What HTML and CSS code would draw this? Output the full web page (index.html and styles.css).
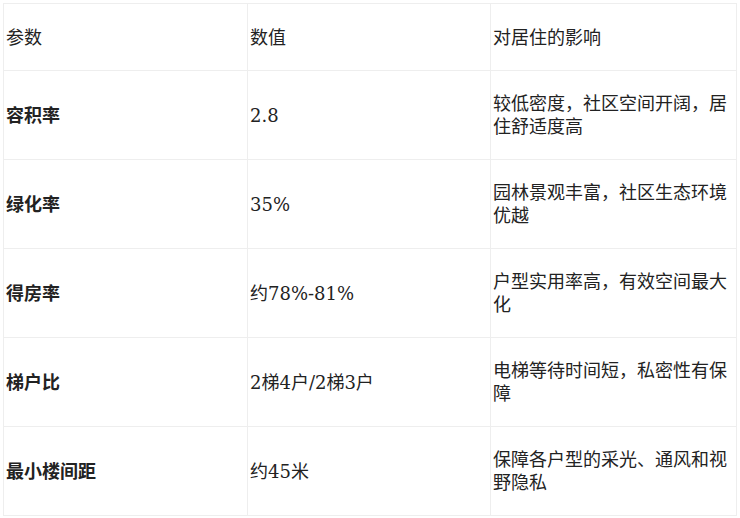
FILE: index.html
```html
<!DOCTYPE html>
<html lang="zh-CN">
<head>
<meta charset="utf-8">
<title>参数表</title>
<link rel="stylesheet" href="styles.css">
</head>
<body>
<table class="params">
  <colgroup>
    <col class="c1">
    <col class="c2">
    <col class="c3">
  </colgroup>
  <thead>
    <tr>
      <th>参数</th>
      <th>数值</th>
      <th>对居住的影响</th>
    </tr>
  </thead>
  <tbody>
    <tr>
      <td class="name">容积率</td>
      <td class="value">2.8</td>
      <td class="effect">较低密度，社区空间开阔，居住舒适度高</td>
    </tr>
    <tr>
      <td class="name">绿化率</td>
      <td class="value">35%</td>
      <td class="effect">园林景观丰富，社区生态环境优越</td>
    </tr>
    <tr>
      <td class="name">得房率</td>
      <td class="value">约78%-81%</td>
      <td class="effect">户型实用率高，有效空间最大化</td>
    </tr>
    <tr>
      <td class="name">梯户比</td>
      <td class="value">2梯4户/2梯3户</td>
      <td class="effect">电梯等待时间短，私密性有保障</td>
    </tr>
    <tr>
      <td class="name">最小楼间距</td>
      <td class="value">约45米</td>
      <td class="effect">保障各户型的采光、通风和视野隐私</td>
    </tr>
  </tbody>
</table>
</body>
</html>
```
FILE: styles.css
```css
html, body {
  margin: 0;
  background: #ffffff;
}
body {
  padding: 3px;
  font-family: "DejaVu Sans", "Noto Sans CJK SC", sans-serif;
  font-size: 18px;
  color: #222222;
}
.params {
  width: 733px;
  border-collapse: collapse;
  table-layout: fixed;
}
.params .c1 { width: 244px; }
.params .c2 { width: 243px; }
.params .c3 { width: 246px; }
.params th,
.params td {
  border: 1px solid #eeeeee;
  padding: 21px 2px;
  line-height: 23px;
  text-align: left;
  vertical-align: middle;
}
.params th {
  font-weight: normal;
  padding-top: 22px;
}
.params td.name {
  font-weight: bold;
}
.params td.value {
  font-family: "DejaVu Serif", "Noto Sans CJK SC", serif;
}
```
